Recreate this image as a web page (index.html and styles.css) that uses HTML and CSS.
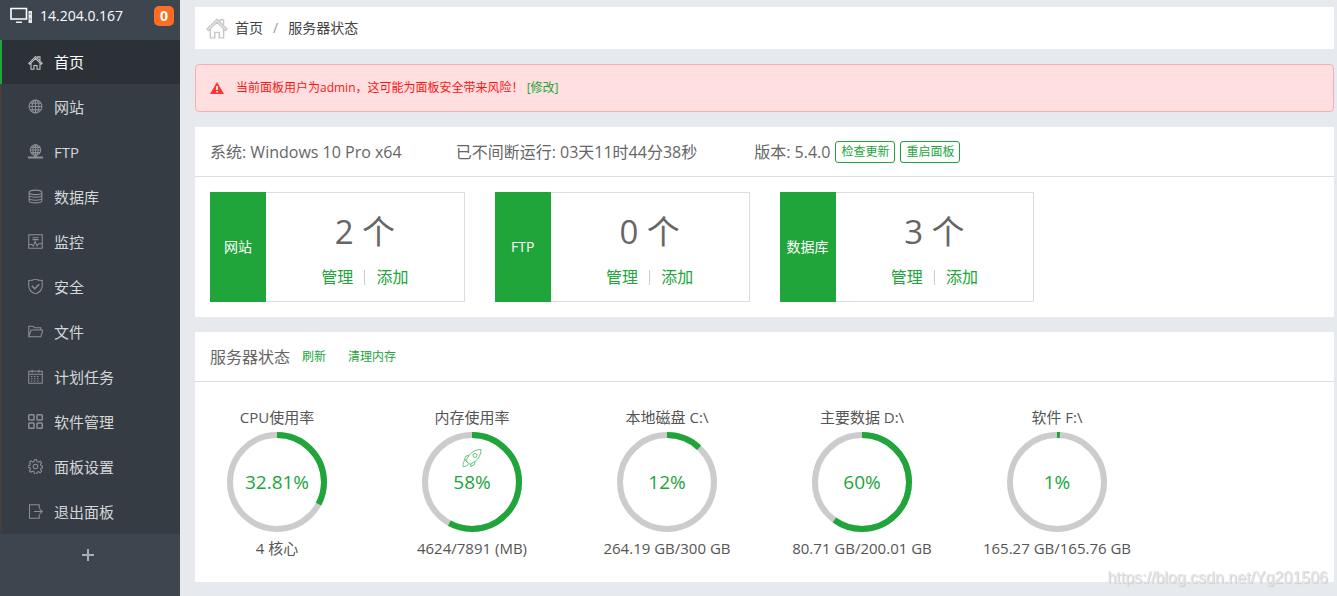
FILE: index.html
```html
<!DOCTYPE html>
<html lang="zh-CN">
<head>
<meta charset="utf-8">
<meta name="viewport" content="width=device-width, initial-scale=1">
<title>服务器状态</title>
<link rel="stylesheet" href="styles.css">
</head>
<body>
<svg class="defs" aria-hidden="true">
  <symbol id="home" viewBox="0 0 20 20"><path d="M1 11 10 2l9 9-1.300 1.200L10 4.600l-7.700 7.600zM4 11v8h4v-5h4v5h4v-8M13 4V2.500h3V7"/></symbol>
</svg>
<div class="layout">
  <aside class="sidebar">
    <header class="host">
      <svg class="host-icon" width="24" height="18" viewBox="0 0 24 18" aria-hidden="true"><path fill="none" stroke="#fff" stroke-width="1.600" d="M1 1.500h15.500V12H1z"/><path fill="#e8eaec" d="M6 14.500h6V16H6zM18.500 4H22v12h-3.500z"/><path stroke="#59616a" d="M19.500 7h1.500M19.500 12h1.500"/></svg>
      <span class="host-ip">14.204.0.167</span>
      <span class="count">0</span>
    </header>
    <nav class="menu">
      <a class="item active" href="#"><svg class="icon" viewBox="0 0 20 20"><use href="#home"/></svg>首页</a>
      <a class="item" href="#"><svg class="icon" viewBox="0 0 20 20"><circle cx="10" cy="10" r="8.500"/><ellipse cx="10" cy="10" rx="4.500" ry="8.500"/><path d="M10 1.500v17M1.500 10h17M3 5.500h14M3 14.500h14"/></svg>网站</a>
      <a class="item" href="#"><svg class="icon" viewBox="0 0 20 20"><circle cx="10" cy="8" r="7"/><ellipse cx="10" cy="8" rx="3.500" ry="7"/><path d="M10 1v17M3 8h14M4 4.500h12M4 11.500h12M0 17.500h20M0 18.500h20M8 16.500h4"/></svg>FTP</a>
      <a class="item" href="#"><svg class="icon" viewBox="0 0 20 20"><ellipse cx="10" cy="4.500" rx="8.500" ry="3"/><path d="M1.500 4.500v11c0 4 17 4 17 0v-11M1.500 8c0 4 17 4 17 0M1.500 12c0 4 17 4 17 0"/></svg>数据库</a>
      <a class="item" href="#"><svg class="icon" viewBox="0 0 20 20"><path d="M1 1h18v18H1zM6 5h8M6 7.500h8M1 14h4l2 2 2.500-6 2.500 6 2-3h5"/></svg>监控</a>
      <a class="item" href="#"><svg class="icon" viewBox="0 0 20 20"><path d="M10 0c3 1.500 6 2 9 2v7c0 5-4 9-9 11C5 18 1 14 1 9V2c3 0 6-.5 9-2z"/><path stroke-width="2" d="M5 9l4 4 6-6"/></svg>安全</a>
      <a class="item" href="#"><svg class="icon" viewBox="0 0 20 20"><path d="M1 17V3h6l1.500 2H17v3M1 17 4 8h16l-3 9z"/></svg>文件</a>
      <a class="item" href="#"><svg class="icon" viewBox="0 0 20 20"><path d="M1 3h18v16H1zM1 7h18M5.500 1v4M14.500 1v4"/><path stroke-dasharray="2 2" d="M4 10h12M4 13h12M4 16h12"/></svg>计划任务</a>
      <a class="item" href="#"><svg class="icon bold" viewBox="0 0 20 20"><rect x="1" y="1" width="7" height="7" rx="1"/><rect x="12" y="1" width="7" height="7" rx="1"/><rect x="1" y="12" width="7" height="7" rx="1"/><rect x="12" y="12" width="7" height="7" rx="1"/></svg>软件管理</a>
      <a class="item" href="#"><svg class="icon" viewBox="0 0 20 20"><path d="M8.500 1h3l.5 2.500 2 .8 2.200-1.500 2 2-1.500 2.200.8 2 2.500.5v2l-2.500.7-.8 2 1.500 2.200-2 2-2.200-1.500-2 .8-.5 2.300h-3L8 16.900l-2-.8-2.200 1.500-2-2 1.500-2.200-.8-2L0 11V9l2.500-.5.8-2-1.500-2.200 2-2L6 4.300l2-.8z"/><circle cx="10" cy="10" r="3"/></svg>面板设置</a>
      <a class="item" href="#"><svg class="icon" viewBox="0 0 20 20"><path d="M15 6V1H2v18h13v-5M8 10h11M15.500 6.500 19 10l-3.500 3.500"/></svg>退出面板</a>
    </nav>
    <button class="add" type="button" aria-label="添加菜单"><svg width="14" height="14" viewBox="0 0 14 14"><path d="M7 1v12M1 7h12"/></svg></button>
  </aside>

  <main class="content">
    <nav class="crumbs">
      <svg class="crumb-icon" viewBox="0 0 20 20" aria-hidden="true"><use href="#home"/></svg>
      <a href="#">首页</a><span class="slash">/</span><span>服务器状态</span>
    </nav>

    <div class="alert" role="alert">
      <svg width="14" height="12" viewBox="0 0 14 12" aria-hidden="true"><path fill="#ff3535" d="M7 0l7 12H0z"/><path stroke="#fff" stroke-width="1.600" d="M7 4v4M7 9v1.500"/></svg>
      <span>当前面板用户为admin，这可能为面板安全带来风险！ <a class="link" href="#">[修改]</a></span>
    </div>

    <section class="panel">
      <header class="panel-head info">
        <span class="system">系统: Windows 10 Pro x64</span>
        <span class="uptime">已不间断运行: 03天11时44分38秒</span>
        <span>版本: 5.4.0</span>
        <button class="outline" type="button">检查更新</button>
        <button class="outline" type="button">重启面板</button>
      </header>
      <div class="cards">
        <article class="card"><h2 class="card-name">网站</h2><div class="card-body"><p class="total">2 个</p><p class="actions"><a class="link" href="#">管理</a><span class="bar"></span><a class="link" href="#">添加</a></p></div></article>
        <article class="card"><h2 class="card-name">FTP</h2><div class="card-body"><p class="total">0 个</p><p class="actions"><a class="link" href="#">管理</a><span class="bar"></span><a class="link" href="#">添加</a></p></div></article>
        <article class="card"><h2 class="card-name">数据库</h2><div class="card-body"><p class="total">3 个</p><p class="actions"><a class="link" href="#">管理</a><span class="bar"></span><a class="link" href="#">添加</a></p></div></article>
      </div>
    </section>

    <section class="panel">
      <header class="panel-head status">
        <h2 class="title">服务器状态</h2>
        <a class="link small" href="#">刷新</a>
        <a class="link small" href="#">清理内存</a>
      </header>
      <div class="gauges">
        <div class="gauge"><h3 class="label">CPU使用率</h3>
          <svg class="ring" viewBox="0 0 100 100"><circle class="track" cx="50" cy="50" r="47"/><circle class="value" cx="50" cy="50" r="47" pathLength="100" stroke-dasharray="32.81 100"/><text x="50" y="57">32.81%</text></svg>
          <p class="detail">4 核心</p></div>
        <div class="gauge"><h3 class="label">内存使用率</h3>
          <svg class="ring" viewBox="0 0 100 100"><circle class="track" cx="50" cy="50" r="47"/><circle class="value" cx="50" cy="50" r="47" pathLength="100" stroke-dasharray="58 100"/><path class="rocket" d="M59 17.500c-5 0-9 2-12 6l-3 5 4 4 5-3c4-3 6-7 6-12zM47 23.500l-3 .5-2 4 3-.5M53 29.500l-.5 3-4 2 .5-3M43.500 28.500c-2 0-2.500 3-2.500 6 3 0 5.500-1 5.500-3z"/><circle class="rocket" cx="53" cy="23.500" r="2"/><text x="50" y="57">58%</text></svg>
          <p class="detail">4624/7891 (MB)</p></div>
        <div class="gauge"><h3 class="label">本地磁盘 C:\</h3>
          <svg class="ring" viewBox="0 0 100 100"><circle class="track" cx="50" cy="50" r="47"/><circle class="value" cx="50" cy="50" r="47" pathLength="100" stroke-dasharray="12 100"/><text x="50" y="57">12%</text></svg>
          <p class="detail">264.19 GB/300 GB</p></div>
        <div class="gauge"><h3 class="label">主要数据 D:\</h3>
          <svg class="ring" viewBox="0 0 100 100"><circle class="track" cx="50" cy="50" r="47"/><circle class="value" cx="50" cy="50" r="47" pathLength="100" stroke-dasharray="60 100"/><text x="50" y="57">60%</text></svg>
          <p class="detail">80.71 GB/200.01 GB</p></div>
        <div class="gauge"><h3 class="label">软件 F:\</h3>
          <svg class="ring" viewBox="0 0 100 100"><circle class="track" cx="50" cy="50" r="47"/><circle class="value" cx="50" cy="50" r="47" pathLength="100" stroke-dasharray="1 100"/><text x="50" y="57">1%</text></svg>
          <p class="detail">165.27 GB/165.76 GB</p></div>
      </div>
    </section>
  </main>
</div>
<div class="watermark">https://blog.csdn.net/Yg201506</div>
</body>
</html>
```

FILE: styles.css
```css
* { box-sizing: border-box; margin: 0; }
body {
  background: #e6e9ee;
  color: #666;
  font: 16px/24px "Open Sans", "Noto Sans CJK SC", sans-serif;
}
a { color: inherit; text-decoration: none; }
button { font: inherit; cursor: pointer; }
h2, h3 { font-weight: 400; }
.defs { display: none; }
.layout { display: flex; min-height: 100vh; }

.sidebar { flex: 0 0 180px; background: #3d454e; }
.host {
  display: flex;
  align-items: center;
  height: 40px;
  padding: 0 6px 8px 10px;
  color: #fff;
  font-size: 14px;
}
.host-icon { flex: none; }
.host-ip { flex: 1; padding-left: 6px; }
.count {
  width: 20px;
  border-radius: 5px;
  background: #ff6c24;
  font-size: 14px;
  font-weight: 700;
  line-height: 20px;
  text-align: center;
}
.item {
  display: flex;
  align-items: center;
  gap: 11px;
  height: 45px;
  padding-left: 26px;
  border-left: 2px solid #443f3e;
  background: #353c43;
  color: #d4d6d8;
  font-size: 15px;
}
.item.active {
  height: 44px;
  border-color: #20a53a;
  background: #2c3037;
  color: #fff;
}
.menu { background: #353c43; }
.icon { width: 15px; height: 15px; fill: none; stroke: #8c9094; stroke-width: 1.4; }
.icon.bold { stroke-width: 2; }
.active .icon { stroke: #c4c6c8; }
.add {
  display: flex;
  justify-content: center;
  width: 100%;
  padding: 14px 4px 14px 0;
  border: 0;
  background: none;
}
.add svg { stroke: #adb0b3; stroke-width: 2; }

.content {
  flex: 1;
  min-width: 0;
  display: flex;
  flex-direction: column;
  gap: 15px;
  padding: 7px 3px 14px 15px;
}
.crumbs {
  display: flex;
  align-items: center;
  height: 42px;
  padding: 0 11px;
  background: #fff;
  color: #444;
  font-size: 14px;
}
.crumb-icon { width: 22px; height: 22px; margin-right: 7px; fill: none; stroke: #c8c8c8; stroke-width: 1.3; }
.slash { padding: 0 10px; color: #999; }
.alert {
  display: flex;
  align-items: center;
  gap: 12px;
  height: 48px;
  padding: 0 14px;
  border: 1px solid #fcaeae;
  border-radius: 4px;
  background: #ffdfdf;
  color: #ff1414;
  font-size: 12px;
}
.link { color: #20a53a; }
.small { font-size: 12px; }

.panel { background: #fff; }
.panel-head {
  display: flex;
  align-items: center;
  height: 50px;
  padding: 0 15px;
  border-bottom: 1px solid #ddd;
}
.info { gap: 5px; }
.system { margin-right: 49px; }
.uptime { margin-right: 52px; }
.outline {
  height: 22px;
  padding: 0 5px;
  border: 1px solid #20a53a;
  border-radius: 3px;
  background: #fff;
  color: #20a53a;
  font-size: 12px;
  line-height: 20px;
}
.cards {
  display: grid;
  grid-template-columns: repeat(4, 1fr);
  gap: 30px;
  padding: 15px;
}
.card { display: flex; height: 110px; border: 1px solid #ddd; border-left: 0; }
.card-name {
  display: flex;
  align-items: center;
  justify-content: center;
  width: 56px;
  margin: -1px 0;
  background: #20a53a;
  color: #fff;
  font-size: 14px;
}
.card-body { flex: 1; text-align: center; }
.total { padding-top: 15px; font-size: 33px; line-height: 48px; }
.actions { display: flex; justify-content: center; align-items: center; padding-top: 9px; }
.bar { width: 1px; height: 15px; margin: 0 11px; background: #ccc; }

.title { margin-right: 12px; font-size: 16px; }
.status .small + .small { margin-left: 22px; }
.gauges { display: flex; gap: 31px; padding: 23px 0 22px; }
.gauge { width: 164px; text-align: center; color: #555; white-space: nowrap; }
.label { font-size: 15px; line-height: 24px; }
.ring { display: block; width: 100px; height: 100px; margin: 3px auto 4px; }
.ring circle { fill: none; stroke-width: 6; }
.ring .track { stroke: #ccc; }
.ring .value { stroke: #20a53a; transform: rotate(-90deg); transform-origin: center; }
.ring text { fill: #20a53a; font-size: 19px; text-anchor: middle; }
.ring .rocket { fill: none; stroke: #6cc47d; stroke-width: 1; }
.detail { font-size: 15px; line-height: 24px; }

.watermark {
  position: fixed;
  right: 9px;
  bottom: 6px;
  color: #e4e4e4;
  font: 16px/24px "Liberation Sans", sans-serif;
  text-shadow: 1px 1px 1px #ccc;
  pointer-events: none;
}
```
